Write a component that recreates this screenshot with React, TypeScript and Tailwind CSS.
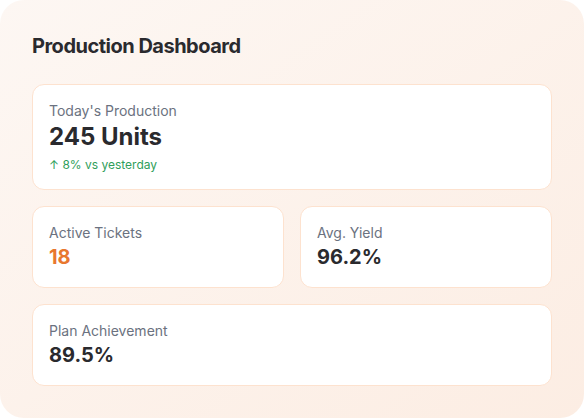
import React from 'react';

const font = { fontFamily: 'Inter, "Noto Sans", sans-serif' };

function StatCard({ label, value, valueClass }: { label: string; value: string; valueClass: string }) {
  return (
    <div className="bg-white rounded-xl border border-[#fde2cf] px-4 py-4">
      <p className="text-sm text-[#6b7280]">{label}</p>
      <p className={`text-xl font-bold ${valueClass}`}>{value}</p>
    </div>
  );
}

export default function App() {
  return (
    <div className="w-[584px] h-[418px] bg-white" style={font}>
      <div className="w-full h-full rounded-3xl bg-gradient-to-br from-[#fdf7f3] to-[#fcede3] p-8">
        <h1 className="text-xl font-bold text-[#2a2a2e] mb-6 tracking-tight">Production Dashboard</h1>

        <div className="flex flex-col gap-4">
          {/* Headline figure */}
          <div className="bg-white rounded-xl border border-[#fde2cf] px-4 py-4">
            <p className="text-sm text-[#6b7280]">Today's Production</p>
            <p className="text-2xl font-bold text-[#2a2a2e]">245 Units</p>
            <p className="text-xs text-[#2f9e5b] mt-1">↑ 8% vs yesterday</p>
          </div>

          <div className="grid grid-cols-2 gap-4">
            <StatCard label="Active Tickets" value="18" valueClass="text-[#e8772e]" />
            <StatCard label="Avg. Yield" value="96.2%" valueClass="text-[#2a2a2e]" />
          </div>

          <StatCard label="Plan Achievement" value="89.5%" valueClass="text-[#2a2a2e]" />
        </div>
      </div>
    </div>
  );
}
